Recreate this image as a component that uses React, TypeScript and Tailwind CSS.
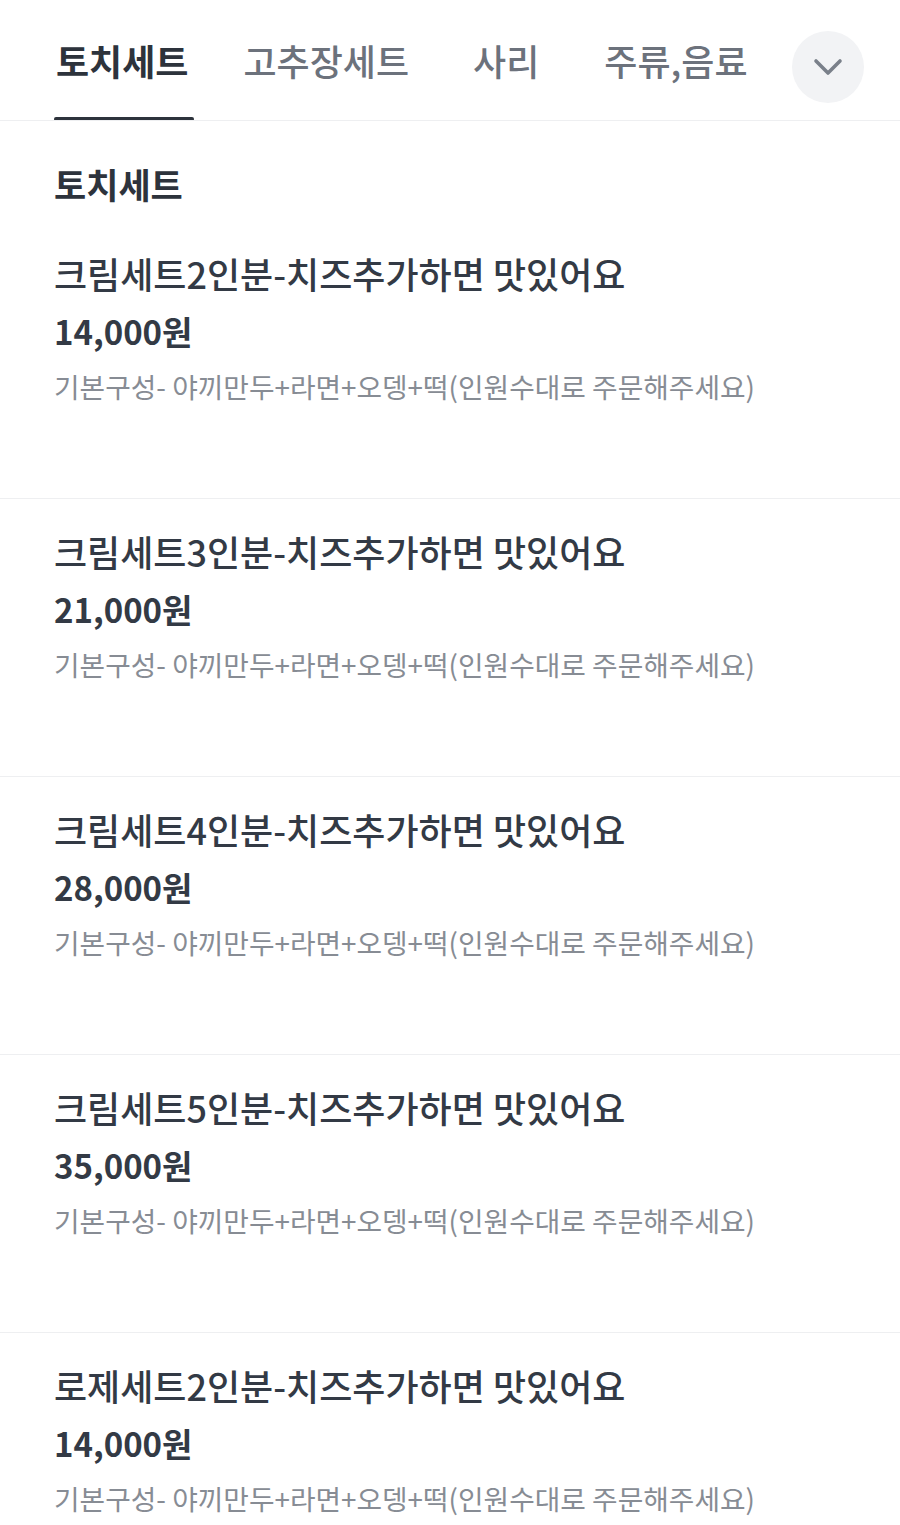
import React from "react";

const tabs = ["토치세트", "고추장세트", "사리", "주류,음료"];
const tabGaps = ["mr-[49px]", "mr-[64px]", "mr-[65px]", "mr-0"];

const menu = [
  { name: "크림세트2인분-치즈추가하면 맛있어요", price: "14,000원" },
  { name: "크림세트3인분-치즈추가하면 맛있어요", price: "21,000원" },
  { name: "크림세트4인분-치즈추가하면 맛있어요", price: "28,000원" },
  { name: "크림세트5인분-치즈추가하면 맛있어요", price: "35,000원" },
  { name: "로제세트2인분-치즈추가하면 맛있어요", price: "14,000원" },
];

const desc = "기본구성- 야끼만두+라면+오뎅+떡(인원수대로 주문해주세요)";

const App: React.FC = () => {
  return (
    <div
      className="w-[900px] h-[1525px] overflow-hidden bg-white text-[#333a45]"
      style={{ fontFamily: '"Noto Sans CJK KR", "Noto Sans", sans-serif' }}
    >
      {/* tabs */}
      <div className="flex items-center h-[121px] border-b border-[#eeeff1] pl-[54px] pr-[36px]">
        <div className="flex items-center h-full flex-1 min-w-0 overflow-hidden">
          {tabs.map((t, i) => (
            <div
              key={t}
              className={
                (i === 0
                  ? "relative h-full flex items-center shrink-0 whitespace-nowrap pl-[2px] pr-[6px] text-[36px] font-bold text-[#2d333c] "
                  : "relative h-full flex items-center shrink-0 whitespace-nowrap text-[36px] font-medium text-[#6c727c] ") +
                tabGaps[i]
              }
            >
              {t}
              {i === 0 && (
                <span className="absolute left-0 right-0 bottom-[-1px] h-[4px] rounded-full bg-[#2d333c]" />
              )}
            </div>
          ))}
        </div>
        <button className="w-[72px] h-[72px] mt-[14px] rounded-full bg-[#f2f3f5] flex items-center justify-center shrink-0">
          <svg width="30" height="18" viewBox="0 0 30 18" fill="none" stroke="#7a808a" strokeWidth="3.6" strokeLinecap="round" strokeLinejoin="round">
            <path d="M3 3L15 15L27 3" />
          </svg>
        </button>
      </div>

      {/* section */}
      <div className="pl-[54px] pt-[40px] pb-[42px]">
        <h2 className="text-[35px] font-bold leading-[46px] text-[#2d333c]">토치세트</h2>
      </div>

      <div>
        {menu.map((m, i) => (
          <div
            key={m.name}
            className={
              i === 0
                ? "pl-[54px] pb-[93px]"
                : "pl-[54px] pt-[28px] pb-[93px] border-t border-[#eeeff1]"
            }
          >
            <div className="text-[36px] font-medium leading-[48px] whitespace-nowrap">{m.name}</div>
            <div className="text-[33px] font-bold leading-[44px] mt-[12px]">{m.price}</div>
            <div className="text-[27.8px] leading-[38px] mt-[14px] text-[#878c94] whitespace-nowrap">{desc}</div>
          </div>
        ))}
      </div>
    </div>
  );
};

export default App;
